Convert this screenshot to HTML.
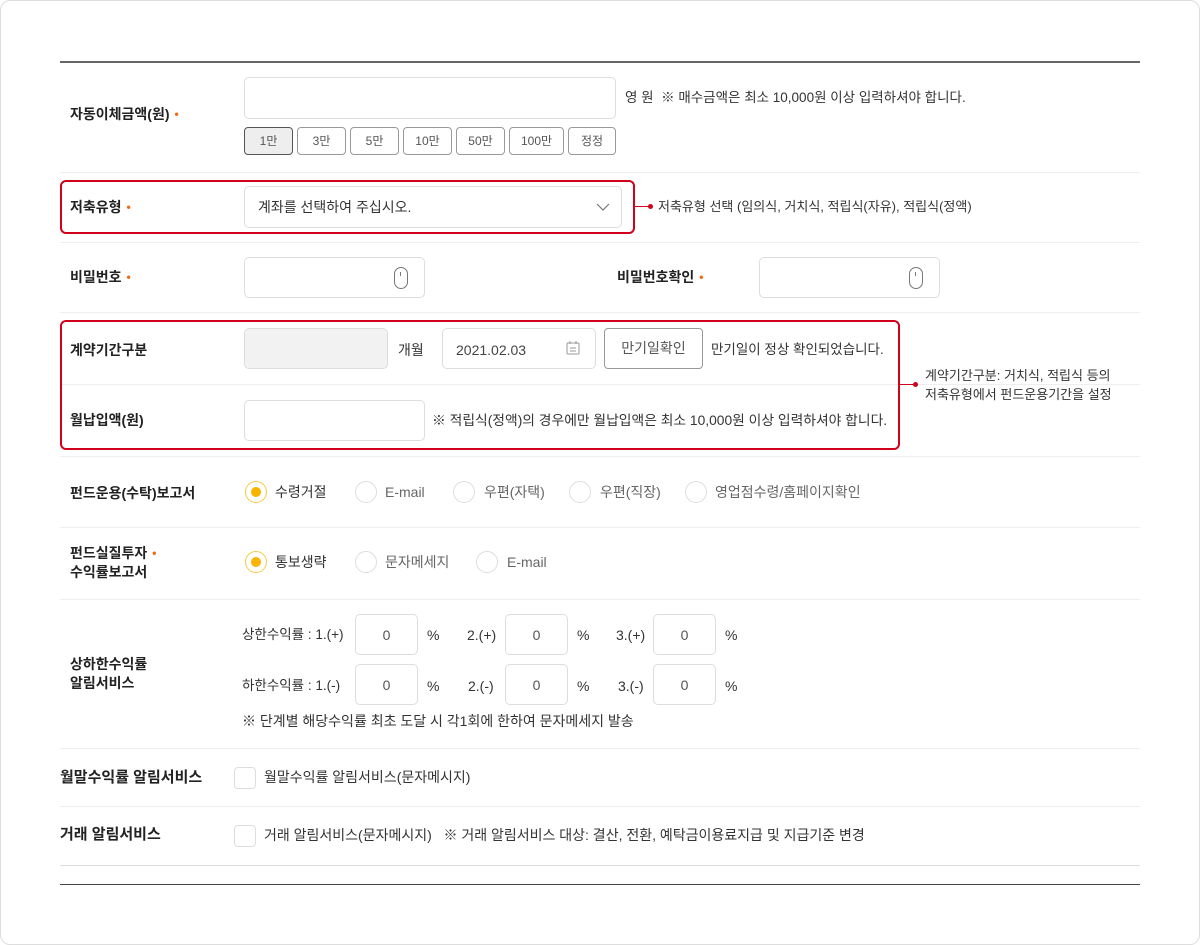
<!DOCTYPE html>
<html><head><meta charset="utf-8"><style>
*{box-sizing:border-box;margin:0;padding:0}
body{width:1200px;height:945px;background:#fff;font-family:"Liberation Sans","Noto Sans CJK KR",sans-serif;color:#222;position:relative;overflow:hidden;font-size:14px}
.a{position:absolute;white-space:nowrap}
.frame{left:0;top:0;width:1200px;height:945px;border:1px solid #ddd;border-radius:10px}
.hl{position:absolute;left:60px;width:1080px;height:1px;background:#eee}
.lb{position:absolute;font-weight:bold;font-size:14px;color:#222;white-space:nowrap;line-height:20px}
.st{color:#f26a0f;font-size:12px;vertical-align:top;margin-left:5px}
.in{position:absolute;border:1px solid #ddd;border-radius:5px;background:#fff}
.bt{position:absolute;border:1px solid #999;border-radius:4px;background:#fff;font-size:12px;color:#555;text-align:center;line-height:26px;height:28px}
.tx{position:absolute;white-space:nowrap;font-size:14px;color:#333;line-height:20px}
.rd{position:absolute;width:22px;height:22px;border:1px solid #ddd;border-radius:50%}
.rd.on{border-color:#f7c948}
.rd.on:after{content:"";position:absolute;left:5px;top:5px;width:10px;height:10px;border-radius:50%;background:#f7b500}
.red{position:absolute;border:2px solid #d0021b;border-radius:6px}
.cb{position:absolute;width:22px;height:22px;border:1px solid #ddd;border-radius:4px}
.num{position:absolute;border:1px solid #ddd;border-radius:5px;width:63px;height:41px;text-align:center;line-height:41px;color:#555;font-size:14px}
.mouse{position:absolute;width:14px;height:22px;border:1px solid #777;border-radius:7px}
.mouse:after{content:"";position:absolute;left:5px;top:4px;width:1px;height:4px;background:#777}
</style></head><body>
<div class="a frame"></div>
<div class="a" style="left:60px;top:61px;width:1080px;height:2px;background:#666"></div>
<div class="hl" style="top:172px"></div>
<div class="hl" style="top:242px"></div>
<div class="hl" style="top:312px"></div>
<div class="hl" style="top:384px"></div>
<div class="hl" style="top:456px"></div>
<div class="hl" style="top:527px"></div>
<div class="hl" style="top:599px"></div>
<div class="hl" style="top:748px"></div>
<div class="hl" style="top:806px"></div>
<div class="hl" style="top:865px;background:#ddd"></div>
<div class="a" style="left:60px;top:884px;width:1080px;height:1px;background:#444"></div>

<!-- row1 -->
<div class="lb" style="left:70px;top:104px">자동이체금액(원)<span class="st">•</span></div>
<div class="in" style="left:244px;top:77px;width:372px;height:42px"></div>
<div class="tx" style="left:625px;top:88px;font-size:13.5px">영 원 &nbsp;※ 매수금액은 최소 10,000원 이상 입력하셔야 합니다.</div>
<div class="bt" style="left:244px;top:127px;width:49px;background:#eee;border-color:#555">1만</div>
<div class="bt" style="left:297px;top:127px;width:49px">3만</div>
<div class="bt" style="left:350px;top:127px;width:49px">5만</div>
<div class="bt" style="left:403px;top:127px;width:49px">10만</div>
<div class="bt" style="left:456px;top:127px;width:49px">50만</div>
<div class="bt" style="left:509px;top:127px;width:55px">100만</div>
<div class="bt" style="left:568px;top:127px;width:48px">정정</div>

<!-- row2 -->
<div class="red" style="left:60px;top:180px;width:575px;height:54px"></div>
<div class="lb" style="left:70px;top:197px">저축유형<span class="st">•</span></div>
<div class="in" style="left:244px;top:186px;width:378px;height:42px"></div>
<div class="tx" style="left:258px;top:197px;font-size:14px">계좌를 선택하여 주십시오.</div>
<svg class="a" style="left:596px;top:202px" width="14" height="10"><path d="M1 2 L7 8 L13 2" fill="none" stroke="#777" stroke-width="1.2"/></svg>
<div class="a" style="left:635px;top:206px;width:16px;height:1px;background:#d0021b"></div>
<div class="a" style="left:648px;top:204px;width:5px;height:5px;border-radius:50%;background:#d0021b"></div>
<div class="tx" style="left:658px;top:197px;font-size:13px">저축유형 선택 (임의식, 거치식, 적립식(자유), 적립식(정액)</div>

<!-- row3 -->
<div class="lb" style="left:70px;top:267px">비밀번호<span class="st">•</span></div>
<div class="in" style="left:244px;top:257px;width:181px;height:41px"></div>
<div class="mouse" style="left:394px;top:267px"></div>
<div class="lb" style="left:617px;top:267px">비밀번호확인<span class="st">•</span></div>
<div class="in" style="left:759px;top:257px;width:181px;height:41px"></div>
<div class="mouse" style="left:909px;top:267px"></div>

<!-- row4 -->
<div class="red" style="left:60px;top:320px;width:840px;height:130px"></div>
<div class="lb" style="left:70px;top:340px">계약기간구분</div>
<div class="in" style="left:244px;top:328px;width:144px;height:41px;background:#f2f2f2"></div>
<div class="tx" style="left:398px;top:340px">개월</div>
<div class="in" style="left:442px;top:328px;width:154px;height:41px"></div>
<div class="tx" style="left:456px;top:340px;color:#444">2021.02.03</div>
<svg class="a" style="left:566px;top:340px" width="14" height="15"><rect x="1" y="3" width="12" height="11" rx="1" fill="none" stroke="#999"/><path d="M4 1v3M10 1v3M4 8h6M4 11h6" stroke="#999"/></svg>
<div class="bt" style="left:604px;top:328px;width:99px;height:41px;line-height:39px;font-size:14px;border-color:#999">만기일확인</div>
<div class="tx" style="left:711px;top:340px;font-size:13.5px">만기일이 정상 확인되었습니다.</div>
<div class="lb" style="left:70px;top:410px">월납입액(원)</div>
<div class="in" style="left:244px;top:400px;width:181px;height:41px"></div>
<div class="tx" style="left:432px;top:411px;font-size:13.8px">※ 적립식(정액)의 경우에만 월납입액은 최소 10,000원 이상 입력하셔야 합니다.</div>
<div class="a" style="left:900px;top:384px;width:16px;height:1px;background:#d0021b"></div>
<div class="a" style="left:913px;top:382px;width:5px;height:5px;border-radius:50%;background:#d0021b"></div>
<div class="tx" style="left:925px;top:366px;font-size:13px;line-height:19px">계약기간구분: 거치식, 적립식 등의<br>저축유형에서 펀드운용기간을 설정</div>

<!-- row5 -->
<div class="lb" style="left:70px;top:483px">펀드운용(수탁)보고서</div>
<div class="rd on" style="left:245px;top:481px"></div><div class="tx" style="left:275px;top:482px">수령거절</div>
<div class="rd" style="left:355px;top:481px"></div><div class="tx" style="left:385px;top:482px;color:#666">E-mail</div>
<div class="rd" style="left:453px;top:481px"></div><div class="tx" style="left:484px;top:482px;color:#666">우편(자택)</div>
<div class="rd" style="left:569px;top:481px"></div><div class="tx" style="left:600px;top:482px;color:#666">우편(직장)</div>
<div class="rd" style="left:685px;top:481px"></div><div class="tx" style="left:715px;top:482px;color:#666">영업점수령/홈페이지확인</div>

<!-- row6 -->
<div class="lb" style="left:70px;top:544px;line-height:19px">펀드실질투자<span class="st">•</span><br>수익률보고서</div>
<div class="rd on" style="left:245px;top:551px"></div><div class="tx" style="left:275px;top:552px">통보생략</div>
<div class="rd" style="left:355px;top:551px"></div><div class="tx" style="left:385px;top:552px;color:#666">문자메세지</div>
<div class="rd" style="left:476px;top:551px"></div><div class="tx" style="left:507px;top:552px;color:#666">E-mail</div>

<!-- row7 -->
<div class="lb" style="left:70px;top:655px;line-height:19px">상하한수익률<br>알림서비스</div>
<div class="tx" style="left:242px;top:625px;font-size:13.5px">상한수익률 : 1.(+)</div>
<div class="num" style="left:355px;top:614px">0</div><div class="tx" style="left:427px;top:625px">%</div>
<div class="tx" style="left:467px;top:625px">2.(+)</div>
<div class="num" style="left:505px;top:614px">0</div><div class="tx" style="left:577px;top:625px">%</div>
<div class="tx" style="left:616px;top:625px">3.(+)</div>
<div class="num" style="left:653px;top:614px">0</div><div class="tx" style="left:725px;top:625px">%</div>
<div class="tx" style="left:242px;top:676px;font-size:13.5px">하한수익률 : 1.(-)</div>
<div class="num" style="left:355px;top:664px">0</div><div class="tx" style="left:427px;top:676px">%</div>
<div class="tx" style="left:468px;top:676px">2.(-)</div>
<div class="num" style="left:505px;top:664px">0</div><div class="tx" style="left:577px;top:676px">%</div>
<div class="tx" style="left:618px;top:676px">3.(-)</div>
<div class="num" style="left:653px;top:664px">0</div><div class="tx" style="left:725px;top:676px">%</div>
<div class="tx" style="left:242px;top:711px;font-size:14px">※ 단계별 해당수익률 최초 도달 시 각1회에 한하여 문자메세지 발송</div>

<!-- row8 -->
<div class="lb" style="left:60px;top:768px;font-size:15px">월말수익률 알림서비스</div>
<div class="cb" style="left:234px;top:767px"></div>
<div class="tx" style="left:264px;top:767px;font-size:14px">월말수익률 알림서비스(문자메시지)</div>

<!-- row9 -->
<div class="lb" style="left:60px;top:825px;font-size:15px">거래 알림서비스</div>
<div class="cb" style="left:234px;top:825px"></div>
<div class="tx" style="left:264px;top:825px;font-size:14px">거래 알림서비스(문자메시지) &nbsp;&nbsp;※ 거래 알림서비스 대상: 결산, 전환, 예탁금이용료지급 및 지급기준 변경</div>
</body></html>
